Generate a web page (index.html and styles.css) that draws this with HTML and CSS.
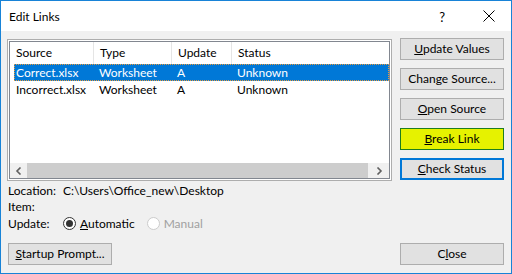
FILE: index.html
```html
<!DOCTYPE html>
<html lang="en">
<head>
  <meta charset="UTF-8" />
  <title>Edit Links</title>
  <link rel="stylesheet" href="styles.css">
</head>
<body>

  <div class="window">
    <div class="titlebar">
      <span class="title">Edit Links</span>
      <span class="help">?</span>
      <svg class="close-x" width="12" height="12" viewBox="0 0 12 12">
        <path d="M0.5 0.5 L11.5 11.5 M11.5 0.5 L0.5 11.5" stroke="#000" stroke-width="1" fill="none"/>
      </svg>
    </div>

    <div class="dialog">
      <div class="main">
        <div class="listbox">
          <div class="list-inner">
            <div class="list-head">
              <span class="cell">Source</span>
              <span class="cell">Type</span>
              <span class="cell">Update</span>
              <span class="cell">Status</span>
            </div>
            <div class="list-row selected">
              <span class="cell">Correct.xlsx</span>
              <span class="cell">Worksheet</span>
              <span class="cell">A</span>
              <span class="cell">Unknown</span>
            </div>
            <div class="list-row">
              <span class="cell">Incorrect.xlsx</span>
              <span class="cell">Worksheet</span>
              <span class="cell">A</span>
              <span class="cell">Unknown</span>
            </div>
            <div class="hscroll">
              <span class="arrow">
                <svg width="8" height="8" viewBox="0 0 8 8"><path d="M5.5 0.5 L2 4 L5.5 7.5" stroke="#606060" stroke-width="1.6" fill="none"/></svg>
              </span>
              <span class="thumb"></span>
              <span class="arrow right">
                <svg width="8" height="8" viewBox="0 0 8 8"><path d="M2.5 0.5 L6 4 L2.5 7.5" stroke="#606060" stroke-width="1.6" fill="none"/></svg>
              </span>
            </div>
          </div>
        </div>

        <div class="side-buttons">
          <button class="btn"><u>U</u>pdate Values</button>
          <button class="btn">Chan<u>g</u>e Source...</button>
          <button class="btn"><u>O</u>pen Source</button>
          <button class="btn btn-break"><u>B</u>reak Link</button>
          <button class="btn btn-focus"><u>C</u>heck Status</button>
        </div>
      </div>

      <div class="info">
        <div class="info-line"><span class="label">Location:</span><span>C:\Users\Office_new\Desktop</span></div>
        <div class="info-line"><span class="label">Item:</span></div>
        <div class="info-line update-line">
          <span class="label">Update:</span>
          <span class="radio checked"></span><span class="radio-text"><u>A</u>utomatic</span>
          <span class="radio disabled"></span><span class="radio-text muted">Manual</span>
        </div>
      </div>

      <div class="footer">
        <button class="btn"><u>S</u>tartup Prompt...</button>
        <button class="btn">C<u>l</u>ose</button>
      </div>
    </div>
  </div>

</body>
</html>
```

FILE: styles.css
```css
* {
  box-sizing: border-box;
}

html, body {
  margin: 0;
  padding: 0;
}

body {
  font-family: "Segoe UI", Lato, "Noto Sans", sans-serif;
  font-size: 12px;
  color: #000;
  background: #f0f0f0;
}

.window {
  width: 512px;
  height: 274px;
  border: 1px solid #1883d7;
  background: #f0f0f0;
  display: flex;
  flex-direction: column;
}

.titlebar {
  height: 30px;
  background: #fff;
  display: flex;
  align-items: center;
  padding-left: 8px;
}

.title {
  flex: 1;
  line-height: 30px;
  padding-top: 1px;
}

.help {
  font-size: 13px;
  margin-right: 38px;
  padding-top: 1px;
}

.close-x {
  margin-right: 16px;
}

.dialog {
  padding: 7px 7px 0 6px;
}

.main {
  display: flex;
  gap: 8px;
}

.listbox {
  width: 385px;
  height: 142px;
  margin-top: 1px;
  border: 1px solid #adadad;
  padding: 1px;
  background: #fff;
}

.list-inner {
  height: 100%;
  border: 1px solid #828790;
  display: flex;
  flex-direction: column;
}

.list-head {
  display: grid;
  grid-template-columns: 83px 78px 60px 1fr;
  height: 22px;
  align-items: center;
}

.list-head .cell {
  padding-left: 6px;
  line-height: 22px;
  border-left: 1px solid #e5e5e5;
}

.list-head .cell:first-child {
  border-left: none;
}

.list-row {
  display: grid;
  grid-template-columns: 79px 78px 60px 1fr;
  margin-left: 4px;
  height: 17px;
  line-height: 17px;
}

.list-row .cell {
  padding-left: 6px;
}

.list-row .cell:first-child {
  padding-left: 2px;
}

.list-row.selected {
  background: #0078d7;
  color: #fff;
  outline: 1px dotted #e89a3c;
  outline-offset: -1px;
}

.hscroll {
  margin-top: auto;
  height: 15px;
  display: flex;
  background: #f0f0f0;
}

.arrow {
  width: 17px;
  display: flex;
  align-items: center;
  justify-content: center;
}

.arrow.right {
  width: 21px;
}

.thumb {
  flex: 1;
  background: #cdcdcd;
}

.side-buttons {
  width: 104px;
  display: flex;
  flex-direction: column;
  gap: 8px;
}

.btn {
  font-family: inherit;
  font-size: 12px;
  height: 22px;
  width: 104px;
  padding: 0;
  background: #e1e1e1;
  border: 1px solid #adadad;
  color: #000;
  line-height: 18px;
}

.btn-break {
  background: #e6f200;
  border-color: #1e7d1e;
}

.btn-focus {
  border: 2px solid #0078d7;
}

.info {
  margin-top: 1px;
  padding-left: 1px;
}

.info-line {
  display: flex;
  align-items: center;
  height: 16px;
}

.label {
  width: 55px;
}

.update-line {
  height: 19px;
}

.radio {
  width: 13px;
  height: 13px;
  border-radius: 50%;
  border: 1px solid #333;
  background: #fff;
  margin-right: 4px;
  display: flex;
  align-items: center;
  justify-content: center;
}

.radio.checked::after {
  content: "";
  width: 7px;
  height: 7px;
  border-radius: 50%;
  background: #333;
}

.radio.disabled {
  border-color: #cccccc;
}

.radio-text {
  margin-right: 12px;
}

.radio-text.muted {
  color: #a0a0a0;
}

.footer {
  margin-top: 10px;
  display: flex;
  justify-content: space-between;
  padding-left: 1px;
}
```
